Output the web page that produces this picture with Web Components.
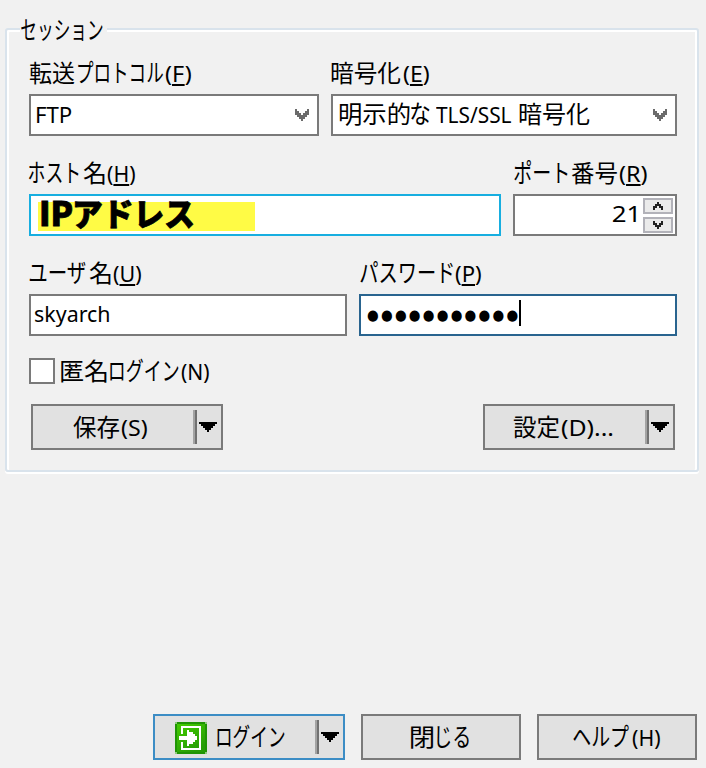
<!DOCTYPE html>
<html lang="ja">
<head>
<meta charset="utf-8">
<title>セッション</title>
<style>
html,body{margin:0;background:#f1f1f1;color:#000}
body{width:706px;height:768px;overflow:hidden;font:24px "Noto Sans CJK JP",sans-serif}
</style>
</head>
<body>
<login-dialog></login-dialog>
<script>
const ctx = document.createElement('canvas').getContext('2d');

/* A run of text whose ink is fitted to a width; its baseline is 24px below the top of a 30px line. */
class FitText extends HTMLElement {
  connectedCallback() {
    if (this.shadowRoot) return;
    const w = +this.getAttribute('w'), gap = +(this.getAttribute('gap') || 0);
    const root = this.attachShadow({mode: 'open'});
    root.innerHTML = `<style>
      :host{display:block;flex:none;height:30px;line-height:30px;white-space:pre;width:${w}px;margin-left:${gap}px}
      :host([latin]){font-family:"Noto Sans",sans-serif;font-size:22px}
      :host([kana]){font-size:25px}
      :host([heavy]){font-weight:900;font-size:32px;-webkit-text-stroke:.8px #000}
      :host([caps]){font-size:34px}
      :host([dots]){font-family:"DejaVu Sans",sans-serif;font-size:15px;letter-spacing:2.5px}
      span{display:inline-block;vertical-align:top;transform-origin:0 0;height:30px}
      ::slotted(u){text-decoration:underline 2px;text-underline-offset:2px;text-decoration-skip-ink:none}
    </style><span><slot></slot></span>`;
    const cs = getComputedStyle(this);
    ctx.font = `${cs.fontWeight} ${cs.fontSize} ${cs.fontFamily}`;
    ctx.letterSpacing = cs.letterSpacing === 'normal' ? '0px' : cs.letterSpacing;
    const m = ctx.measureText(this.textContent);
    const s = w / (m.actualBoundingBoxRight + m.actualBoundingBoxLeft);
    const base = 15 + (m.fontBoundingBoxAscent - m.fontBoundingBoxDescent) / 2;
    root.querySelector('span').style.transform =
      `translate(${m.actualBoundingBoxLeft * s}px,${Math.round(24 - base)}px) scaleX(${s})`;
  }
}

class UiElement extends HTMLElement {
  connectedCallback() {
    if (!this.shadowRoot) this.attachShadow({mode: 'open'}).innerHTML = this.render();
  }
}

/* A label over a bordered box. */
class FormField extends UiElement {
  render() {
    return `<style>
      :host{display:block;flex:none}
      .label{display:flex;height:36px;padding-left:var(--label-pad,0)}
      .box{display:flex;box-sizing:border-box;height:42px;background:#fff;border:2px solid var(--line,#7a7a7a);padding-top:var(--top,3px);padding-left:var(--pad,5px)}
    </style><div class="label"><slot name="label"></slot></div><div class="box"><slot></slot></div>`;
  }
}

class ComboArrow extends UiElement {
  render() {
    return `<style>:host{display:block;margin:10px 8px 0 auto;height:12px}svg{display:block}</style>
    <svg width="14" height="12" viewBox="0 0 7 6" shape-rendering="crispEdges"><path fill="#6b6b6b" d="M0 0h1v1h1v1h1v1h1v-1h1v-1h1v-1h1v3h-1v1h-1v1h-1v1h-1v-1h-1v-1h-1v-1h-1z"/></svg>`;
  }
}

class SpinButtons extends UiElement {
  render() {
    return `<style>:host{display:grid;gap:2px;margin:0 2px 0 auto}
      div{box-sizing:border-box;width:30px;height:16px;border:2px solid #b2b2b9;background:#ebebeb;display:flex;justify-content:center;padding-top:2px}
      svg{display:block}</style>
    <div><svg width="10" height="8" viewBox="0 0 5 4" shape-rendering="crispEdges"><path fill="#222" d="M2 0h1v1h1v1h1v2h-1v-1h-1v-1h-1v1h-1v1h-1v-2h1v-1h1z"/></svg></div>
    <div><svg width="10" height="8" viewBox="0 0 5 4" shape-rendering="crispEdges"><path fill="#222" d="M0 0h1v1h1v1h1v-1h1v-1h1v2h-1v1h-1v1h-1v-1h-1v-1h-1z"/></svg></div>`;
  }
}

class PushButton extends UiElement {
  render() {
    const split = this.hasAttribute('split') ? `<svg width="24" height="34" viewBox="0 0 24 34" shape-rendering="crispEdges">
      <path fill="#a3a3a3" d="M0 0h2v34h-2z"/><path fill="#717171" d="M2 0h2v34h-2z"/>
      <path d="M6 12h18v2h-2v2h-2v2h-2v2h-2v2h-2v-2h-2v-2h-2v-2h-2v-2h-2z"/></svg>` : '';
    return `<style>
      :host{display:flex;flex:none;box-sizing:border-box;width:160px;height:46px;border:2px solid var(--line,#7a7a7a);background:#e1e1e1;padding:6px 0 0 var(--pad,0)}
      :host([split]){width:192px}
      svg{display:block;margin:-2px 4px 0 auto}
    </style><slot></slot>${split}`;
  }
}

class LoginIcon extends UiElement {
  render() {
    return `<style>:host{display:block;width:32px;height:32px}svg{display:block}</style>
    <svg width="32" height="32" viewBox="0 0 16 16" shape-rendering="crispEdges">
      <defs><linearGradient id="g" x2=".6" y2="1"><stop stop-color="#44cc00"/><stop offset="1" stop-color="#259c06"/></linearGradient></defs>
      <path fill="#8fca7e" d="M0 0h16v16H0z"/><path fill="#1f9404" d="M1 0h14v1h1v14h-1v1H1v-1H0V1h1z"/>
      <path fill="url(#g)" d="M1 1h14v14H1z"/>
      <path fill="#fff" d="M3 2h10v12H3v-4h1v3h8V3H4v3H3z"/>
      <path fill="#fff" d="M2 7h4V4h1v1h2v1h1v1h1v2h-1v1H9v1H7v1H6V9H2z"/>
    </svg>`;
  }
}

class GroupBox extends UiElement {
  render() {
    return `<style>
      :host{display:block;box-sizing:border-box;width:694px;height:444px;margin:28px 0 0 5px;border:2px solid #d9e3ec;border-radius:3px;box-shadow:inset 2px 2px #fff,inset -2px 0 #fff,0 2px #fff}
      .title{display:flex;width:86px;height:30px;margin:-15px 0 0 13px;background:#f1f1f1;padding-left:1px}
      .body{padding:13px 0 0 22px}
    </style><div class="title"><slot name="title"></slot></div><div class="body"><slot></slot></div>`;
  }
}

class LoginDialog extends UiElement {
  render() {
    return `<style>
      :host{display:flow-root;height:768px}
      .row{display:flex;gap:12px;height:100px}
      .check{display:flex;width:26px;height:26px;box-sizing:border-box;border:2px solid #7a7a7a;background:#fff;margin-top:2px}
      .mark{display:flex;width:217px;height:29px;background:#fffb45;margin:6px 0 0 7px;padding-left:2px;box-sizing:border-box}
      .caret{width:2px;height:26px;background:#000;margin:4px 0 0 1.5px}
      .line{display:flex}
      .actions{display:flex;justify-content:space-between;width:644px;margin:18px 0 0 2px}
      .footer{display:flex;gap:16px;margin:242px 0 0 153px}
    </style>
    <group-box>
      <fit-text slot="title" kana w="82">セッション</fit-text>
      <div class="row">
        <form-field style="width:290px;--pad:5.5px">
          <fit-text slot="label" w="46">転送</fit-text><fit-text slot="label" kana w="85" gap="2.5">プロトコル</fit-text><fit-text slot="label" latin w="26" gap="2">(<u>F</u>)</fit-text>
          <fit-text latin w="35">FTP</fit-text><combo-arrow></combo-arrow>
        </form-field>
        <form-field style="width:346px;--pad:5.5px">
          <fit-text slot="label" w="70">暗号化</fit-text><fit-text slot="label" latin w="26" gap="2">(<u>E</u>)</fit-text>
          <fit-text w="71">明示的</fit-text><fit-text kana w="19" gap="1">な</fit-text><fit-text latin w="75" gap="6">TLS/SSL</fit-text><fit-text w="71" gap="8">暗号化</fit-text><combo-arrow></combo-arrow>
        </form-field>
      </div>
      <div class="row">
        <form-field style="width:472px;--line:#17aee0;--pad:0;--top:0">
          <fit-text slot="label" kana w="50">ホスト</fit-text><fit-text slot="label" w="22" gap="4">名</fit-text><fit-text slot="label" latin w="28" gap="2">(<u>H</u>)</fit-text>
          <div class="mark"><fit-text heavy caps w="31" gap="1">IP</fit-text><fit-text heavy w="118" gap="3">アドレス</fit-text></div>
        </form-field>
        <form-field style="width:164px;--pad:98px;--top:2px">
          <fit-text slot="label" kana w="54" gap="1">ポート</fit-text><fit-text slot="label" w="46" gap="2.5">番号</fit-text><fit-text slot="label" latin w="28" gap="2">(<u>R</u>)</fit-text>
          <fit-text latin w="23">21</fit-text><spin-buttons></spin-buttons>
        </form-field>
      </div>
      <div class="row" style="height:98px">
        <form-field style="width:318px;--pad:3.5px;--top:2px">
          <fit-text slot="label" kana w="57">ユーザ</fit-text><fit-text slot="label" w="22" gap="3">名</fit-text><fit-text slot="label" latin w="28" gap="2">(<u>U</u>)</fit-text>
          <fit-text latin w="74">skyarch</fit-text>
        </form-field>
        <form-field style="width:318px;--line:#29648f;--pad:5.5px;--top:0;--label-pad:1px">
          <fit-text slot="label" kana w="93">パスワード</fit-text><fit-text slot="label" latin w="26" gap="2">(<u>P</u>)</fit-text>
          <fit-text dots w="151">●●●●●●●●●●●</fit-text><div class="caret"></div>
        </form-field>
      </div>
      <div class="line">
        <div class="check"></div><fit-text w="46" gap="5.5">匿名</fit-text><fit-text kana w="69" gap="3">ログイン</fit-text><fit-text latin w="28" gap="2">(N)</fit-text>
      </div>
      <div class="actions">
        <push-button split style="--pad:40px"><fit-text w="46">保存</fit-text><fit-text latin w="26" gap="2">(S)</fit-text></push-button>
        <push-button split style="--pad:28px"><fit-text w="46">設定</fit-text><fit-text latin w="52" gap="2">(D)...</fit-text></push-button>
      </div>
    </group-box>
    <div class="footer">
      <push-button split style="--pad:20px;--line:#3c8dc5"><login-icon></login-icon><fit-text kana w="68" gap="10">ログイン</fit-text></push-button>
      <push-button style="--pad:48px"><fit-text w="22">閉</fit-text><fit-text kana w="32" gap="4">じる</fit-text></push-button>
      <push-button style="--pad:34px"><fit-text kana w="56">ヘルプ</fit-text><fit-text latin w="28" gap="2.5">(H)</fit-text></push-button>
    </div>`;
  }
}

customElements.define('fit-text', FitText);
customElements.define('form-field', FormField);
customElements.define('combo-arrow', ComboArrow);
customElements.define('spin-buttons', SpinButtons);
customElements.define('push-button', PushButton);
customElements.define('login-icon', LoginIcon);
customElements.define('group-box', GroupBox);
customElements.define('login-dialog', LoginDialog);
</script>
</body>
</html>
